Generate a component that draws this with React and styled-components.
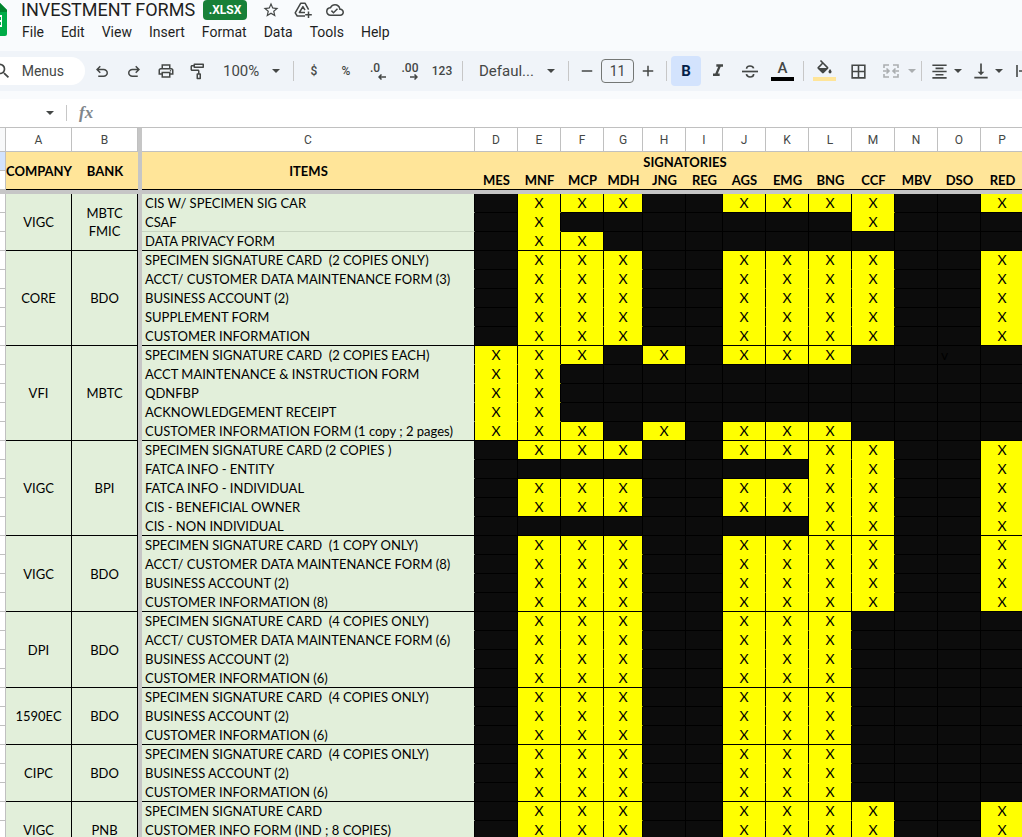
import React, { useState } from "react";
import styled, { createGlobalStyle } from "styled-components";
import {
  MdStarBorder,
  MdOutlineCloudDone,
  MdSearch,
  MdOutlinePrint,
  MdOutlineImagesearchRoller,
  MdFormatItalic,
  MdBorderAll,
  MdFormatAlignCenter,
  MdVerticalAlignBottom,
  MdAdd,
  MdRemove,
} from "react-icons/md";

const MENUS = ["File", "Edit", "View", "Insert", "Format", "Data", "Tools", "Help"];

const COLUMNS = [
  { letter: "D", name: "MES", width: 43 },
  { letter: "E", name: "MNF", width: 43 },
  { letter: "F", name: "MCP", width: 43 },
  { letter: "G", name: "MDH", width: 39 },
  { letter: "H", name: "JNG", width: 43 },
  { letter: "I", name: "REG", width: 37 },
  { letter: "J", name: "AGS", width: 43 },
  { letter: "K", name: "EMG", width: 43 },
  { letter: "L", name: "BNG", width: 43 },
  { letter: "M", name: "CCF", width: 43 },
  { letter: "N", name: "MBV", width: 43 },
  { letter: "O", name: "DSO", width: 43 },
  { letter: "P", name: "RED", width: 43 },
];

// one character per signatory column, D to P
const FULL = ".XXX..XXXX..X";
const NO_CCF = ".XXX..XXX....";
const NONE = ".............";

const GROUPS = [
  {
    company: "VIGC",
    bank: "MBTC FMIC",
    rows: [
      ["CIS W/ SPECIMEN SIG CAR", FULL],
      ["CSAF", ".X.......X...", true],
      ["DATA PRIVACY FORM", ".XX.........."],
    ],
  },
  {
    company: "CORE",
    bank: "BDO",
    rows: [
      ["SPECIMEN SIGNATURE CARD  (2 COPIES ONLY)", FULL],
      ["ACCT/ CUSTOMER DATA MAINTENANCE FORM (3)", FULL],
      ["BUSINESS ACCOUNT (2)", FULL],
      ["SUPPLEMENT FORM", FULL],
      ["CUSTOMER INFORMATION", FULL],
    ],
  },
  {
    company: "VFI",
    bank: "MBTC",
    rows: [
      ["SPECIMEN SIGNATURE CARD  (2 COPIES EACH)", "XXX.X.XXX..v."],
      ["ACCT MAINTENANCE & INSTRUCTION FORM", "XX..........."],
      ["QDNFBP", "XX..........."],
      ["ACKNOWLEDGEMENT RECEIPT", "XX..........."],
      ["CUSTOMER INFORMATION FORM (1 copy ; 2 pages)", "XXX.X.XXX...."],
    ],
  },
  {
    company: "VIGC",
    bank: "BPI",
    rows: [
      ["SPECIMEN SIGNATURE CARD (2 COPIES )", FULL],
      ["FATCA INFO - ENTITY", "........XX..X"],
      ["FATCA INFO - INDIVIDUAL", FULL],
      ["CIS - BENEFICIAL OWNER", FULL],
      ["CIS - NON INDIVIDUAL", "........XX..X"],
    ],
  },
  {
    company: "VIGC",
    bank: "BDO",
    rows: [
      ["SPECIMEN SIGNATURE CARD  (1 COPY ONLY)", FULL],
      ["ACCT/ CUSTOMER DATA MAINTENANCE FORM (8)", FULL],
      ["BUSINESS ACCOUNT (2)", FULL],
      ["CUSTOMER INFORMATION (8)", FULL],
    ],
  },
  {
    company: "DPI",
    bank: "BDO",
    rows: [
      ["SPECIMEN SIGNATURE CARD  (4 COPIES ONLY)", NO_CCF],
      ["ACCT/ CUSTOMER DATA MAINTENANCE FORM (6)", NO_CCF],
      ["BUSINESS ACCOUNT (2)", NO_CCF],
      ["CUSTOMER INFORMATION (6)", NO_CCF],
    ],
  },
  {
    company: "1590EC",
    bank: "BDO",
    rows: [
      ["SPECIMEN SIGNATURE CARD  (4 COPIES ONLY)", NO_CCF],
      ["BUSINESS ACCOUNT (2)", NO_CCF],
      ["CUSTOMER INFORMATION (6)", NO_CCF],
    ],
  },
  {
    company: "CIPC",
    bank: "BDO",
    rows: [
      ["SPECIMEN SIGNATURE CARD  (4 COPIES ONLY)", NO_CCF],
      ["BUSINESS ACCOUNT (2)", NO_CCF],
      ["CUSTOMER INFORMATION (6)", NO_CCF],
    ],
  },
  {
    company: "VIGC",
    bank: "PNB",
    rows: [
      ["SPECIMEN SIGNATURE CARD", FULL],
      ["CUSTOMER INFO FORM (IND ; 8 COPIES)", FULL],
      ["", NONE],
    ],
  },
];

const SheetsLogo = () => (
  <svg width="7" height="38" viewBox="0 0 7 38" aria-hidden="true">
    <path d="M0 3 L7 10 V34 Q7 36 5 36 H0 Z" fill="#00ac47" />
    <path d="M0 3 L7 10 V12 H0 Z" fill="#00832d" />
    <path d="M0 15 H2 V27 H0 Z" fill="#fff" />
    <path d="M0 17 H1 V20 H0 Z M0 22 H1 V25 H0 Z" fill="#00ac47" />
  </svg>
);

const DriveAddIcon = () => (
  <svg
    width="18"
    height="18"
    viewBox="0 0 18 18"
    fill="none"
    stroke="currentColor"
    strokeWidth="1.5"
    strokeLinejoin="round"
    aria-hidden="true"
  >
    <path d="M11 15H3.2L1.2 11.8L6.8 2.2H11L14.6 8.6" />
    <path d="M11 11.5H5.4L8.9 5.6L11 9.2" />
    <path d="M14.5 10.5V17M11.2 13.7H17.8" />
  </svg>
);

const UndoIcon = ({ flip }) => (
  <svg width="18" height="18" viewBox="0 0 24 24" fill="currentColor" aria-hidden="true">
    <path
      transform={flip ? "translate(24 1) scale(-1 1)" : "translate(0 1)"}
      d="M7 19v-2h7.1q1.575 0 2.738-1T18 13.5 16.838 11 14.1 10H7.8l2.6 2.6L9 14 4 9l5-5 1.4 1.4L7.8 8h6.3q2.425 0 4.163 1.575T20 13.5t-1.737 3.925T14.1 19z"
    />
  </svg>
);

const StrikeIcon = () => (
  <svg
    width="18"
    height="18"
    viewBox="0 0 18 18"
    fill="none"
    stroke="currentColor"
    strokeWidth="1.7"
    aria-hidden="true"
  >
    <path d="M1 9.5H17" />
    <path d="M12.6 6.4C12.2 4.6 10.8 4 9 4C7 4 5.6 4.9 5.6 6.8" />
    <path d="M5.4 12.2C5.8 14.2 7.2 15 9 15C11.2 15 12.6 14 12.6 12" />
  </svg>
);

const FillIcon = () => (
  <svg width="19" height="14" viewBox="0 0 24 17.7" fill="currentColor" aria-hidden="true">
    <path d="M16.56 8.94L7.62 0 6.21 1.41l2.38 2.38-5.15 5.15a1.49 1.49 0 0 0 0 2.12l5.5 5.5c.29.29.68.44 1.06.44s.77-.15 1.06-.44l5.5-5.5c.59-.58.59-1.53 0-2.12zM5.21 10L10 5.21 14.79 10H5.21zM19 11.5s-2 2.17-2 3.5c0 1.1.9 2 2 2s2-.9 2-2c0-1.33-2-3.5-2-3.5z" />
  </svg>
);

const SmallArrow = ({ right }) => (
  <svg width="8" height="6" viewBox="0 0 8 6" fill="none" stroke="currentColor" aria-hidden="true">
    <path
      d={right ? "M0 3H7M4.5 0.5L7 3L4.5 5.5" : "M8 3H1M3.5 0.5L1 3L3.5 5.5"}
      strokeWidth="1.5"
    />
  </svg>
);

const MergeIcon = () => (
  <svg width="18" height="18" viewBox="0 0 18 18" fill="none" stroke="currentColor" aria-hidden="true">
    <path
      d="M7 3H2V6M11 3H16V6M7 15H2V12M11 15H16V12M1 9H7M17 9H11M4.5 6.5L7 9L4.5 11.5M13.5 6.5L11 9L13.5 11.5"
      strokeWidth="1.6"
    />
  </svg>
);

const WrapIcon = () => (
  <svg width="18" height="18" viewBox="0 0 18 18" fill="none" stroke="currentColor" aria-hidden="true">
    <path d="M2 3V15M16 3V15M4 9H12M10 6L13 9L10 12" strokeWidth="1.6" />
  </svg>
);

const Caret = () => (
  <svg width="8" height="4" viewBox="0 0 8 4" fill="currentColor" aria-hidden="true">
    <path d="M0 0H8L4 4Z" />
  </svg>
);

const App = () => {
  const [size, setSize] = useState("11");

  return (
    <StPage>
      <GlobalStyle />
      <StHeader>
        <SheetsLogo />
        <StHeaderBody>
          <StTitleRow>
            <StTitle>INVESTMENT FORMS</StTitle>
            <StBadge>.XLSX</StBadge>
            <StTitleButton aria-label="Star">
              <MdStarBorder size={18} />
            </StTitleButton>
            <StTitleButton aria-label="Add to Drive">
              <DriveAddIcon />
            </StTitleButton>
            <StTitleButton aria-label="Saved to Drive">
              <MdOutlineCloudDone size={18} />
            </StTitleButton>
          </StTitleRow>
          <StMenu>
            {MENUS.map((menu) => (
              <StMenuButton key={menu}>{menu}</StMenuButton>
            ))}
          </StMenu>
        </StHeaderBody>
      </StHeader>

      <StToolbar>
        <StSearch>
          <MdSearch size={20} />
          <span>Menus</span>
        </StSearch>
        <StTool aria-label="Undo">
          <UndoIcon />
        </StTool>
        <StTool aria-label="Redo">
          <UndoIcon flip />
        </StTool>
        <StTool aria-label="Print">
          <MdOutlinePrint size={18} />
        </StTool>
        <StTool aria-label="Paint format">
          <MdOutlineImagesearchRoller size={18} />
        </StTool>
        <StPicker $width={75}>
          100%
          <Caret />
        </StPicker>
        <StDivider />
        <StTool $small>$</StTool>
        <StTool $small>%</StTool>
        <StTool aria-label="Decrease decimal places">
          <StDecimal>
            <StDigits $shift>.0</StDigits>
            <SmallArrow />
          </StDecimal>
        </StTool>
        <StTool aria-label="Increase decimal places">
          <StDecimal>
            <StDigits>.00</StDigits>
            <SmallArrow right />
          </StDecimal>
        </StTool>
        <StTool $small>123</StTool>
        <StDivider />
        <StPicker $width={97} $left={12}>
          Defaul...
          <Caret />
        </StPicker>
        <StDivider />
        <StTool $width={28} aria-label="Decrease font size">
          <MdRemove size={18} />
        </StTool>
        <StSizeInput
          aria-label="Font size"
          value={size}
          onChange={(e) => setSize(e.target.value)}
        />
        <StTool $width={28} aria-label="Increase font size">
          <MdAdd size={18} />
        </StTool>
        <StDivider />
        <StBold>B</StBold>
        <StTool aria-label="Italic">
          <MdFormatItalic size={20} />
        </StTool>
        <StTool aria-label="Strikethrough">
          <StrikeIcon />
        </StTool>
        <StColorTool $color="#000" aria-label="Text color">
          A
        </StColorTool>
        <StDivider />
        <StColorTool $color="#ffe599" aria-label="Fill color">
          <FillIcon />
        </StColorTool>
        <StTool $width={34} aria-label="Borders">
          <MdBorderAll size={19} />
        </StTool>
        <StDropTool $width={42} $off aria-label="Merge cells">
          <MergeIcon />
          <Caret />
        </StDropTool>
        <StDivider />
        <StDropTool $width={41} aria-label="Horizontal align">
          <MdFormatAlignCenter size={19} />
          <Caret />
        </StDropTool>
        <StDropTool $width={41} aria-label="Vertical align">
          <MdVerticalAlignBottom size={20} />
          <Caret />
        </StDropTool>
        <StTool aria-label="Text wrapping">
          <WrapIcon />
        </StTool>
      </StToolbar>

      <StFormulaBar>
        <StNameBox aria-label="Name box">
          <Caret />
        </StNameBox>
        <StFx>fx</StFx>
        <StFormulaInput aria-label="Formula" />
      </StFormulaBar>

      <StSheet>
        <colgroup>
          <StCol $width={6} />
          <StCol $width={66} />
          <StCol $width={66} />
          <StCol $width={4} />
          <col />
          {COLUMNS.map((col) => (
            <StCol key={col.letter} $width={col.width} />
          ))}
        </colgroup>
        <thead>
          <tr>
            <StCorner />
            <StLetter>A</StLetter>
            <StLetter>B</StLetter>
            <StFreeze />
            <StLetter>C</StLetter>
            {COLUMNS.map((col) => (
              <StLetter key={col.letter}>{col.letter}</StLetter>
            ))}
          </tr>
          <tr>
            <StRowHead $selected />
            <StHeadCell rowSpan={2} $line>
              COMPANY
            </StHeadCell>
            <StHeadCell rowSpan={2} $line>
              BANK
            </StHeadCell>
            <StFreeze rowSpan={2} />
            <StHeadCell rowSpan={2} $line>
              ITEMS
            </StHeadCell>
            <StHeadCell colSpan={10}>SIGNATORIES</StHeadCell>
            <StHeadCell colSpan={3} />
          </tr>
          <tr>
            <StRowHead />
            {COLUMNS.map((col) => (
              <StHeadCell key={col.name} $line>
                {col.name}
              </StHeadCell>
            ))}
          </tr>
          <tr>
            <StFreezeRow colSpan={18} />
          </tr>
        </thead>
        <tbody>
          {GROUPS.map((group, g) =>
            group.rows.map(([item, marks, underline], r) => {
              const last = r === group.rows.length - 1;
              return (
                <tr key={`${g}-${r}`}>
                  <StRowHead />
                  {r === 0 && (
                    <>
                      <StGroupCell rowSpan={group.rows.length}>{group.company}</StGroupCell>
                      <StGroupCell rowSpan={group.rows.length} $narrow>
                        {group.bank}
                      </StGroupCell>
                    </>
                  )}
                  <StFreeze />
                  <StItem $last={last} $underline={underline}>
                    {item}
                  </StItem>
                  {marks.split("").map((mark, i) => {
                    const joined = !last && mark === "X" && group.rows[r + 1][1][i] === "X";
                    return (
                      <StMark
                        key={COLUMNS[i].letter}
                        $on={mark === "X"}
                        $joined={joined}
                        $left={mark === "v"}
                      >
                        {mark === "." ? "" : mark}
                      </StMark>
                    );
                  })}
                </tr>
              );
            })
          )}
        </tbody>
      </StSheet>
    </StPage>
  );
};

export default App;

const GlobalStyle = createGlobalStyle`
  * {
    box-sizing: border-box;
  }
  body {
    margin: 0;
    background: #f9fbfd;
    font-family: Roboto, "Liberation Sans", sans-serif;
  }
  button {
    border: none;
    padding: 0;
    background: none;
    font-family: inherit;
    color: inherit;
  }
`;

const StPage = styled.div`
  height: 100vh;
  overflow: hidden;
  color: #444746;
`;

const StHeader = styled.header`
  display: flex;
  height: 51px;
`;

const StHeaderBody = styled.div`
  padding-left: 7px;
`;

const StTitleRow = styled.div`
  display: flex;
  align-items: center;
  height: 20px;
  padding-left: 7px;
`;

const StTitle = styled.h1`
  margin: 0 8px 0 0;
  font-size: 18px;
  line-height: 20px;
  font-weight: 400;
  color: #1f1f1f;
`;

const StBadge = styled.span`
  width: 44px;
  height: 20px;
  margin-right: 8px;
  border-radius: 4px;
  background: #188038;
  color: #fff;
  font-size: 12px;
  font-weight: 700;
  line-height: 20px;
  text-align: center;
`;

const StTitleButton = styled.button`
  display: flex;
  align-items: center;
  justify-content: center;
  width: 32px;
  height: 20px;
`;

const StMenu = styled.nav`
  display: flex;
  gap: 1px;
  height: 24px;
`;

const StMenuButton = styled.button`
  padding: 0 8px;
  color: #1f1f1f;
  font-size: 14px;
  line-height: 24px;
`;

const StToolbar = styled.div`
  display: flex;
  align-items: center;
  height: 40px;
  overflow: hidden;
  background: #f0f4f9;
`;

const StSearch = styled.button`
  display: flex;
  flex: none;
  align-items: center;
  justify-content: flex-end;
  gap: 10px;
  width: 85px;
  height: 28px;
  margin-right: 1px;
  padding-right: 21px;
  border-radius: 0 14px 14px 0;
  background: #fff;
  font-size: 14px;
  svg {
    flex: none;
  }
`;

const StTool = styled.button`
  display: flex;
  flex: none;
  align-items: center;
  justify-content: center;
  width: ${({ $width }) => $width || 32}px;
  height: 30px;
  font-size: ${({ $small }) => ($small ? 12 : 14)}px;
  font-weight: 500;
`;

const StPicker = styled.button`
  display: flex;
  flex: none;
  align-items: center;
  justify-content: space-between;
  width: ${({ $width }) => $width}px;
  height: 30px;
  padding: 0 9px;
  padding-left: ${({ $left }) => $left || 9}px;
  font-size: 15px;
`;

const StDivider = styled.span`
  flex: none;
  width: 1px;
  height: 20px;
  margin: 0 4px;
  background: #c7c7c7;
`;

const StDecimal = styled.span`
  display: flex;
  flex-direction: column;
  align-items: flex-end;
  font-size: 12px;
  line-height: 12px;
`;

const StDigits = styled.span`
  padding-right: ${({ $shift }) => ($shift ? 6 : 0)}px;
`;

const StSizeInput = styled.input`
  flex: none;
  width: 33px;
  height: 24px;
  padding: 0;
  border: 1px solid #747775;
  border-radius: 4px;
  background: transparent;
  color: #444746;
  font-family: inherit;
  font-size: 14px;
  text-align: center;
`;

const StBold = styled.button`
  flex: none;
  width: 30px;
  height: 30px;
  margin-right: 1px;
  border-radius: 4px;
  background: #d3e3fd;
  color: #041e49;
  font-size: 15px;
  font-weight: 700;
`;

const StColorTool = styled(StTool)`
  width: 33px;
  flex-direction: column;
  padding-bottom: 2px;
  font-size: 15px;
  line-height: 17px;
  svg {
    margin-bottom: 3px;
  }
  &::after {
    content: "";
    width: 23px;
    height: 4px;
    background: ${({ $color }) => $color};
  }
`;

const StDropTool = styled.button`
  display: flex;
  flex: none;
  align-items: center;
  justify-content: space-between;
  width: ${({ $width }) => $width}px;
  height: 30px;
  padding-right: ${({ $off }) => ($off ? 1 : 5)}px;
  padding-left: ${({ $off }) => ($off ? 7 : 4)}px;
  opacity: ${({ $off }) => ($off ? 0.4 : 1)};
`;

const StFormulaBar = styled.div`
  display: flex;
  align-items: center;
  height: 37px;
  border-top: 8px solid #f9fbfd;
  border-bottom: 1px solid #c0c0c0;
  background: #fff;
`;

const StNameBox = styled.button`
  display: flex;
  align-items: center;
  justify-content: flex-end;
  width: 67px;
  height: 16px;
  padding-right: 12px;
  border-right: 1px solid #c7c7c7;
`;

const StFx = styled.span`
  padding: 0 8px 0 12px;
  color: #80868b;
  font-family: "Liberation Serif", serif;
  font-size: 17px;
  font-style: italic;
  font-weight: 700;
`;

const StFormulaInput = styled.input`
  flex: 1;
  height: 24px;
  border: none;
  outline: none;
`;

/* the last column's right border runs past the window edge */
const StSheet = styled.table`
  width: calc(100% + 2px);
  min-width: 1024px;
  table-layout: fixed;
  border-collapse: separate;
  border-spacing: 0;
  color: #000;
  font-family: Lato, "Liberation Sans", sans-serif;
  font-size: 13px;
  line-height: 18px;
  td,
  th {
    padding: 0;
  }
`;

const StCol = styled.col`
  width: ${({ $width }) => $width}px;
`;

const StLetter = styled.th`
  height: 24px;
  border-right: 1px solid #c0c0c0;
  border-bottom: 1px solid #c0c0c0;
  background: #fff;
  color: #444746;
  font-family: Roboto, "Liberation Sans", sans-serif;
  font-size: 12px;
  font-weight: 400;
`;

const StCorner = styled.td`
  border-right: 1px solid #c0c0c0;
  border-bottom: 1px solid #c0c0c0;
  background: #f8f9fa;
`;

const StRowHead = styled.td`
  height: 19px;
  border-right: 1px solid #c0c0c0;
  border-bottom: 1px solid #c0c0c0;
  background: ${({ $selected }) => ($selected ? "#d3e3fd" : "#fff")};
`;

const StFreeze = styled.td`
  background: #c6c6c6;
`;

const StFreezeRow = styled.td`
  height: 4px;
  background: #c6c6c6;
`;

const StHeadCell = styled.th`
  border-bottom: ${({ $line }) => ($line ? "1px solid #000" : "none")};
  background: #ffe599;
  font-weight: 700;
  white-space: nowrap;
`;

const StGroupCell = styled.td`
  border-right: 1px solid #000;
  border-bottom: 1px solid #000;
  background: #e2efda;
  text-align: center;
  && {
    padding: ${({ $narrow }) => ($narrow ? "0 12px" : 0)};
  }
`;

const StItem = styled.td`
  height: 19px;
  border-right: 1px solid #000;
  border-bottom: 1px solid
    ${({ $last, $underline }) => ($last ? "#000" : $underline ? "#c8d5c1" : "#e2efda")};
  background: #e2efda;
  white-space: pre;
  && {
    padding-left: 3px;
  }
`;

const StMark = styled.td`
  border-right: 1px solid #000;
  border-bottom: 1px solid ${({ $joined }) => ($joined ? "#ff0" : "#000")};
  background: ${({ $on }) => ($on ? "#ff0" : "#0c0c0c")};
  font-size: 14px;
  text-align: ${({ $left }) => ($left ? "left" : "center")};
  && {
    padding-left: ${({ $left }) => ($left ? 3 : 0)}px;
  }
`;
